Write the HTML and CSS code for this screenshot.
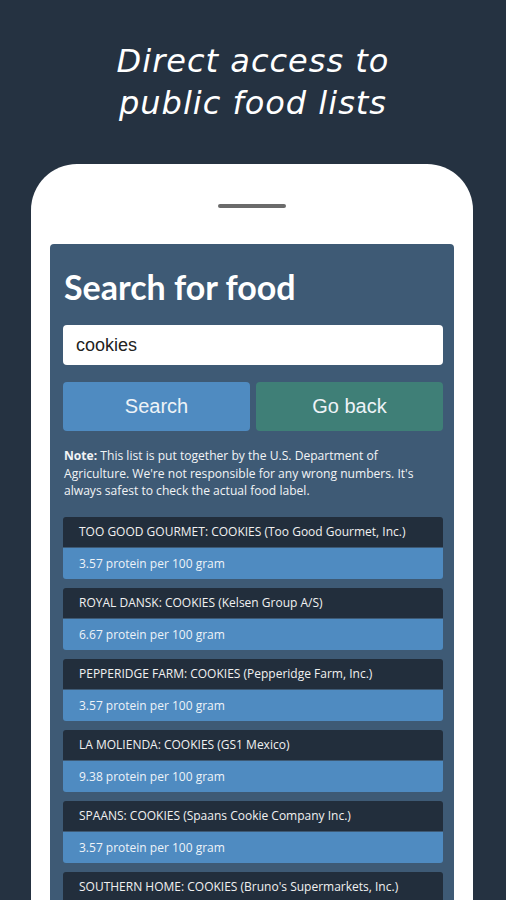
FILE: index.html
```html
<!DOCTYPE html>
<html lang="en">
<head>
<meta charset="UTF-8">
<meta name="viewport" content="width=device-width, initial-scale=1.0">
<title>Search for food</title>
<link rel="stylesheet" href="styles.css">
</head>
<body>
    <h1 class="promo">Direct access to<br>public food lists</h1>

    <div class="phone">
        <div class="speaker"></div>
        <div class="screen">
            <h2 class="heading">Search for food</h2>
            <input class="search-box" type="text" value="cookies">
            <div class="actions">
                <button class="btn btn-search">Search</button>
                <button class="btn btn-back">Go back</button>
            </div>
            <p class="note"><b>Note:</b> This list is put together by the U.S. Department of Agriculture. We're not responsible for any wrong numbers. It's always safest to check the actual food label.</p>

            <!-- results -->
            <div class="results">
                <div class="item">
                    <div class="item-name">TOO GOOD GOURMET: COOKIES (Too Good Gourmet, Inc.)</div>
                    <div class="item-value">3.57 protein per 100 gram</div>
                </div>
                <div class="item">
                    <div class="item-name">ROYAL DANSK: COOKIES (Kelsen Group A/S)</div>
                    <div class="item-value">6.67 protein per 100 gram</div>
                </div>
                <div class="item">
                    <div class="item-name">PEPPERIDGE FARM: COOKIES (Pepperidge Farm, Inc.)</div>
                    <div class="item-value">3.57 protein per 100 gram</div>
                </div>
                <div class="item">
                    <div class="item-name">LA MOLIENDA: COOKIES (GS1 Mexico)</div>
                    <div class="item-value">9.38 protein per 100 gram</div>
                </div>
                <div class="item">
                    <div class="item-name">SPAANS: COOKIES (Spaans Cookie Company Inc.)</div>
                    <div class="item-value">3.57 protein per 100 gram</div>
                </div>
                <div class="item">
                    <div class="item-name">SOUTHERN HOME: COOKIES (Bruno's Supermarkets, Inc.)</div>
                    <div class="item-value">3.57 protein per 100 gram</div>
                </div>
            </div>
        </div>
    </div>
</body>
</html>
```

FILE: styles.css
```css
body {
    margin: 0;
    padding: 0;
    height: 900px;
    overflow: hidden;
    background-color: #253241;
    font-family: "Open Sans", sans-serif;
}
.promo {
    margin: 0;
    padding-top: 40px;
    text-align: center;
    color: #fff;
    font-family: "DejaVu Sans", sans-serif;
    font-style: italic;
    font-weight: normal;
    font-size: 32px;
    line-height: 42px;
    letter-spacing: 1px;
}
.phone {
    margin: 40px 33px 0 31px;
    padding: 40px 19px 0 19px;
    height: 800px;
    background-color: #fff;
    border-radius: 46px 46px 0 0;
}
.speaker {
    width: 68px;
    height: 4px;
    margin: 0 auto 36px;
    border-radius: 2px;
    background-color: #6b6b6b;
}
.screen {
    background-color: #3e5a75;
    border-radius: 4px 4px 0 0;
    padding: 21px 11px 0 13px;
    height: 700px;
}
.heading {
    margin: 0 0 16px 1px;
    color: #fff;
    font-family: Lato, sans-serif;
    font-weight: bold;
    font-size: 34px;
    line-height: 44px;
}
.search-box {
    display: block;
    box-sizing: border-box;
    width: 100%;
    height: 40px;
    margin: 0;
    padding: 0 13px;
    border: none;
    border-radius: 4px;
    background: #fff;
    color: #222;
    font-family: "Liberation Sans", sans-serif;
    font-size: 18px;
    outline: none;
}
.actions {
    display: grid;
    grid-template-columns: 1fr 1fr;
    gap: 6px;
    margin-top: 17px;
}
.btn {
    height: 49px;
    border: none;
    border-radius: 4px;
    color: #eef3f7;
    font-family: "Liberation Sans", sans-serif;
    font-size: 20px;
}
.btn-search {
    background-color: #4f8bc1;
}
.btn-back {
    background-color: #3f7f77;
}
.note {
    margin: 16px 0 0 1px;
    padding-right: 8px;
    color: #f2f4f6;
    font-size: 12.1px;
    line-height: 17.5px;
}
.results {
    display: flex;
    flex-direction: column;
    gap: 9px;
    margin-top: 17px;
}
.item {
    border-radius: 3px;
    overflow: hidden;
    font-size: 12px;
}
.item-name {
    height: 30px;
    line-height: 30px;
    padding-left: 16px;
    background-color: #222e3c;
    color: #f1f1f1;
}
.item-value {
    height: 31px;
    line-height: 32px;
    padding-left: 16px;
    margin-top: 1px;
    background-color: #4f8bc1;
    color: #eef3f8;
}
```
